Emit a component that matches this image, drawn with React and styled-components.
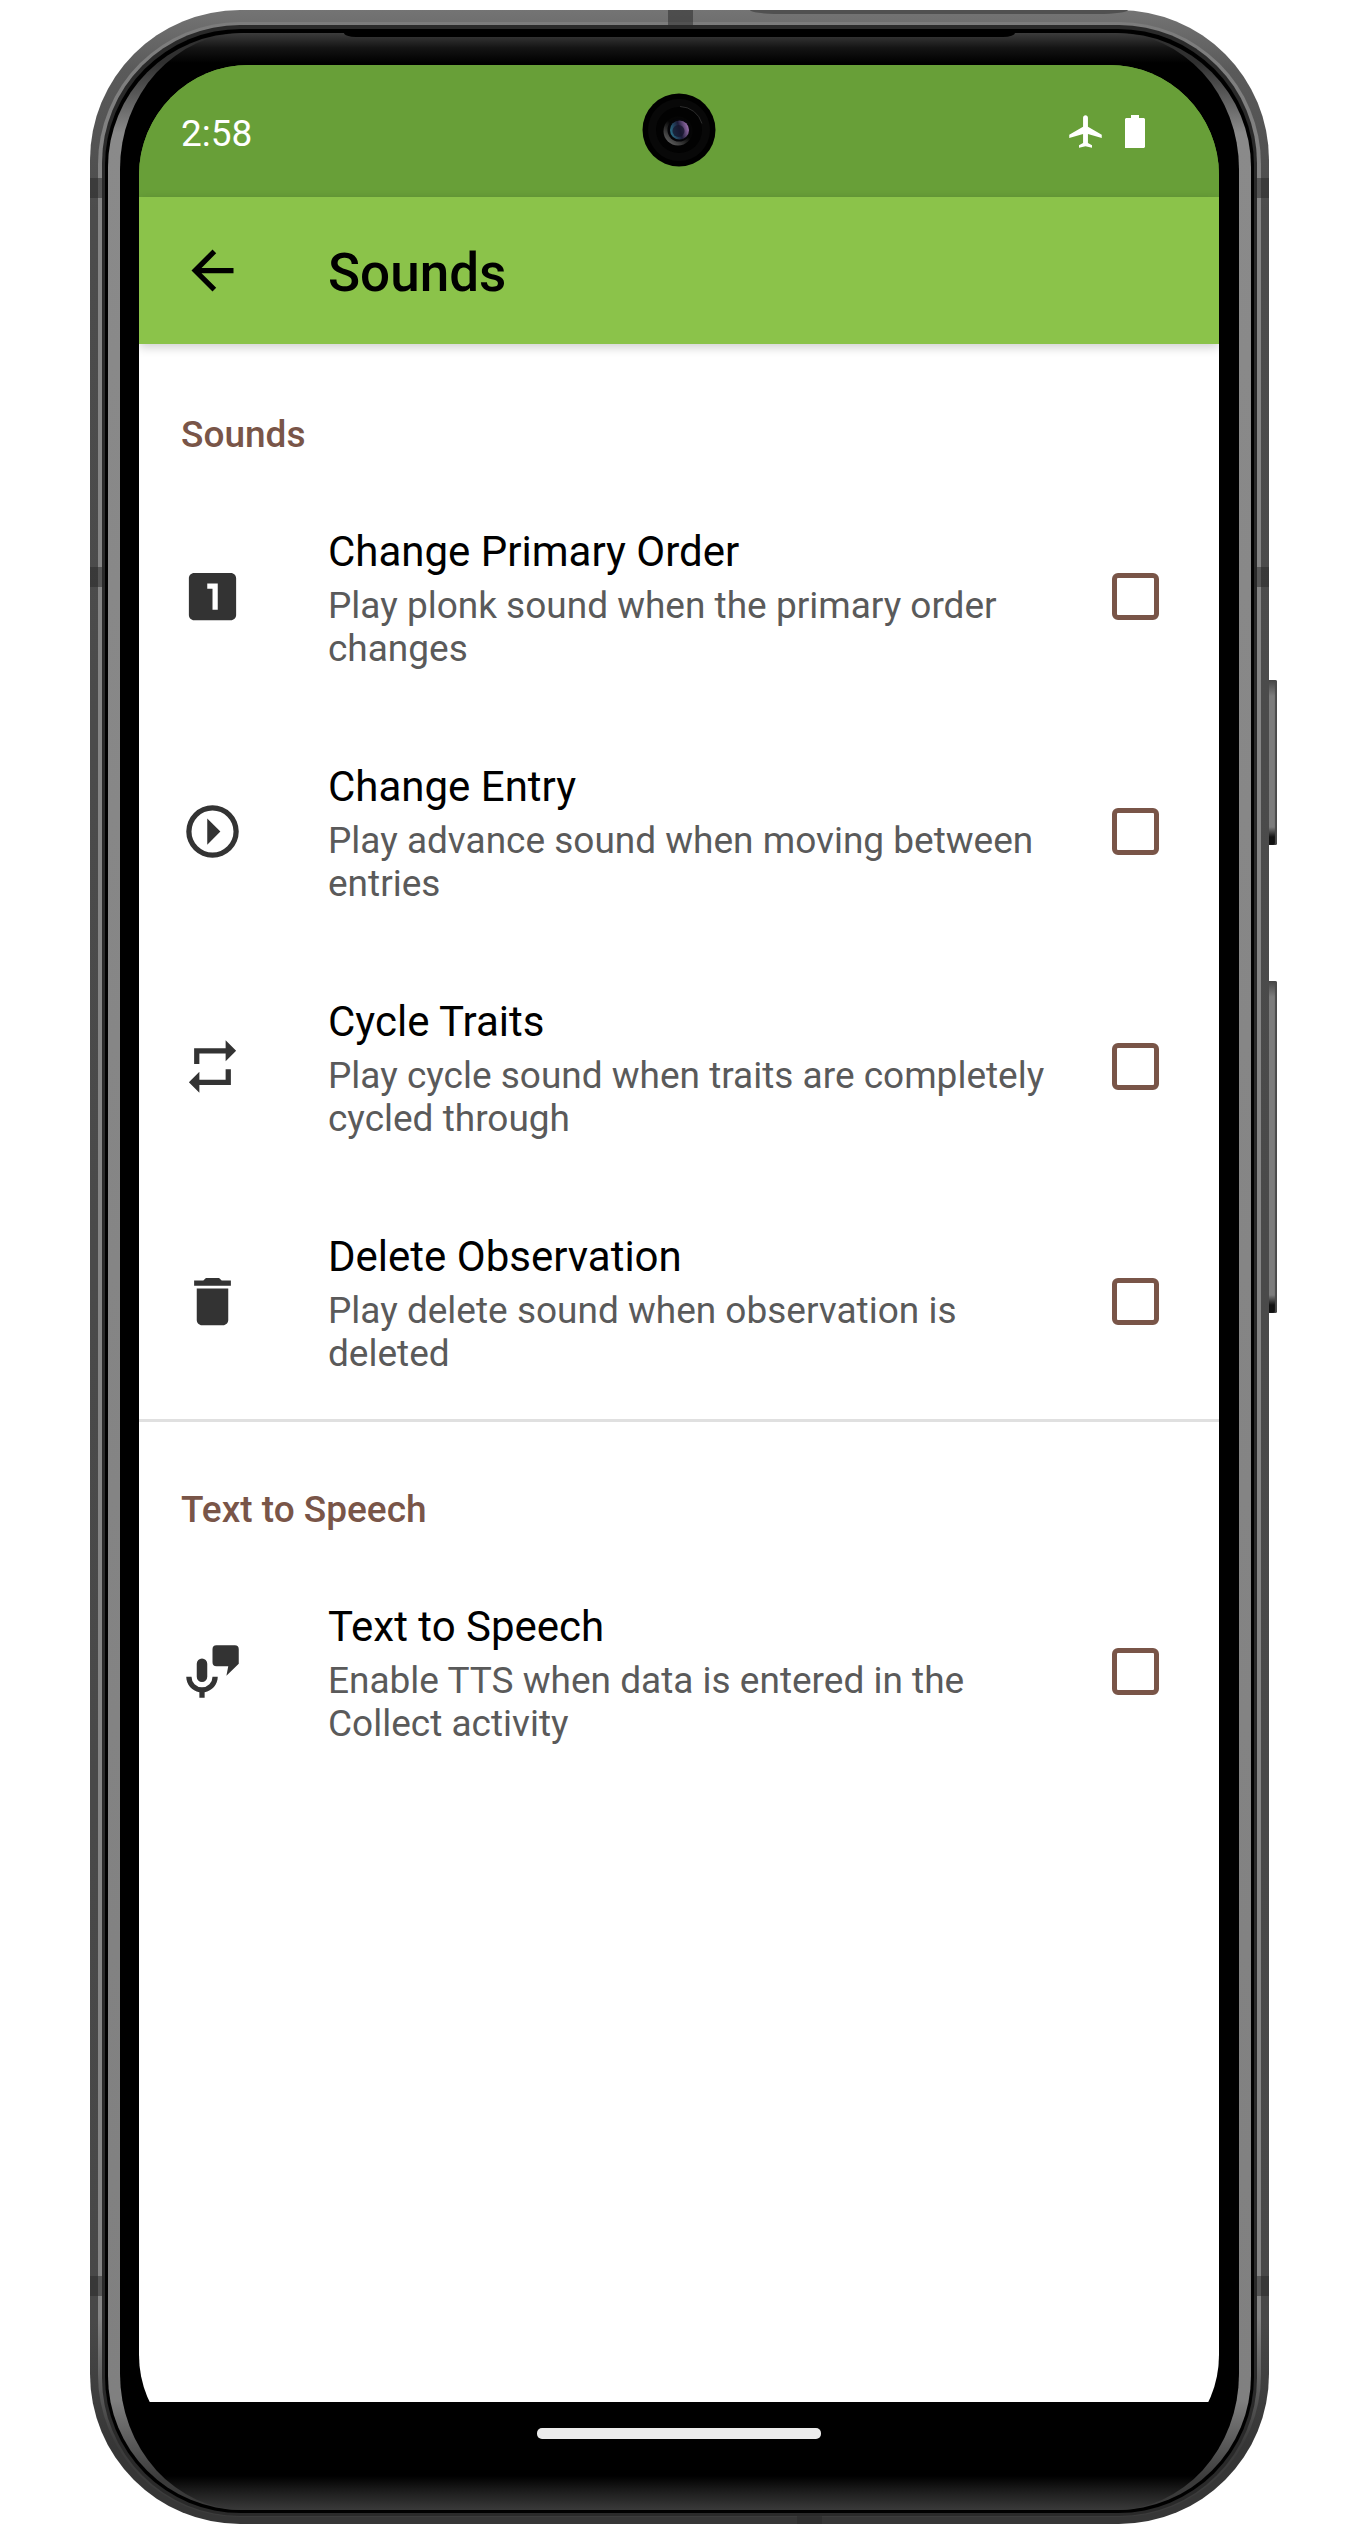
import React from "react";
import styled, { createGlobalStyle } from "styled-components";

const GlobalStyle = createGlobalStyle`
  *, *::before, *::after { box-sizing: border-box; }
  body {
    margin: 0;
    background: #fff;
    font-family: Roboto, "Noto Sans", sans-serif;
    color: #000;
  }
`;

const Page = styled.div`
  display: flex;
  justify-content: center;
  padding: 10px 98px 10px 90px;
`;

/* ---- device body, from the outside in ---- */

const Shell = styled.div`
  position: relative;
  flex: 1;
  max-width: 1179px;
  padding: 12px 8px 7px;
  border-radius: 150px;
  background: linear-gradient(#747474, #5a5a5a 60px, #4c4c4c 200px, #484848 92%, #363636 97%);
`;

const Rim = styled.div`
  padding: 3px 4px 1px;
  border-radius: 142px;
  background: linear-gradient(#7c7c7c, #858585 200px, #858585 92%, #3c3c3c 97%);
`;

const Groove = styled.div`
  padding: 4px 3px 3px;
  border-radius: 138px;
  background: #2a2a2a;
`;

const Gasket = styled.div`
  padding: 4px 3px 3px;
  border-radius: 136px;
  background: #000;
`;

const Glass = styled.div`
  padding: 0 12px;
  border-radius: 134px;
  background: linear-gradient(#303030 30px, #8a8a8a 100px, #808080 calc(100% - 110px), #3a3a3a calc(100% - 30px));
`;

const Bezel = styled.div`
  position: relative;
  padding: 32px 20px 45px 19px;
  border-radius: 124px / 136px;
  background: linear-gradient(#3c3c3c, #141414 15px, #000 30px, #000 calc(100% - 34px), #1a1a1a calc(100% - 20px), #3a3a3a 100%);
`;

const Earpiece = styled.span`
  position: absolute;
  top: 0;
  left: 20%;
  right: 20%;
  height: 4px;
  border-radius: 0 0 12px 12px / 0 0 4px 4px;
  background: #000;
`;

const isSide = (edge) => edge === "left" || edge === "right";

const Band = styled.span`
  position: absolute;
  background: rgba(40, 40, 40, 0.5);
  width: ${(p) => (isSide(p.$edge) ? 15 : 25)}px;
  height: ${(p) => (isSide(p.$edge) ? 20 : p.$edge === "top" ? 19 : 8)}px;
  ${(p) => p.$edge}: 0;
  ${(p) => (isSide(p.$edge) ? "top" : "left")}: ${(p) => p.$at};
`;

const TopPlate = styled.span`
  position: absolute;
  top: 0;
  left: 56%;
  right: 12%;
  height: 4px;
  border-radius: 0 0 30px 30px / 0 0 4px 4px;
  background: #505050;
`;

const SideKey = styled.span`
  position: absolute;
  left: 100%;
  top: ${(p) => p.$top}px;
  width: 8px;
  height: ${(p) => p.$length}px;
  border-radius: 0 2px 2px 0;
  background: linear-gradient(#444, #7c7c7c 16px, #7c7c7c calc(100% - 18px), #111 calc(100% - 8px));
  box-shadow: inset -2px 0 1px #4a4a4a;
`;

/* ---- screen ---- */

const Screen = styled.div`
  display: flex;
  flex-direction: column;
  min-height: 2400px;
  overflow: hidden;
  border-radius: 110px;
  background: linear-gradient(#689f38 132px, #fff 132px, #fff calc(100% - 63px), #000 calc(100% - 63px));
`;

const StatusBar = styled.div`
  position: relative;
  display: flex;
  align-items: center;
  justify-content: space-between;
  height: 132px;
  padding: 4px 74px 0 42px;
  background: #689f38;
  color: #fff;
  font-size: 37px;
  line-height: 43px;
`;

const StatusIcons = styled.div`
  display: flex;
  align-items: center;
  gap: 20px;
  padding-bottom: 4px;
`;

const Camera = styled.svg`
  position: absolute;
  top: 28px;
  left: calc(50% - 37px);
`;

const AppBar = styled.header`
  position: relative;
  display: flex;
  align-items: center;
  gap: 84px;
  height: 147px;
  padding: 0 42px;
  background: #8bc34a;
  box-shadow: 0 3px 10px rgba(0, 0, 0, 0.2);
`;

const BackButton = styled.button`
  display: flex;
  padding: 0;
  border: 0;
  background: none;
  color: #000;
`;

const AppTitle = styled.h1`
  margin: 0;
  padding-top: 4px;
  font-size: 53px;
  line-height: 62px;
  font-weight: 500;
`;

const Settings = styled.main`
  flex: 1;
`;

const SectionTitle = styled.h2`
  display: flex;
  align-items: flex-end;
  height: 135px;
  margin: 0;
  padding: 0 42px 23px;
  color: #795548;
  font-size: 37px;
  line-height: 43px;
  font-weight: 500;
`;

const Section = styled.section`
  & + & > ${SectionTitle} { border-top: 3px solid #e0e0e0; }
`;

const Row = styled.label`
  display: flex;
  align-items: center;
  min-height: 235px;
  padding: 0 60px 0 42px;
`;

const IconSlot = styled.span`
  display: flex;
  margin-right: 84px;
  color: #333;
`;

const RowText = styled.span`
  flex: 1;
  display: flex;
  flex-direction: column;
  gap: 8px;
  padding: 4px 40px 0 0;
`;

const RowTitle = styled.span`
  font-size: 42px;
  line-height: 49px;
`;

const RowSummary = styled.span`
  color: #5a5a5a;
  font-size: 37px;
  line-height: 43px;
`;

const Checkbox = styled.input`
  appearance: none;
  width: 47px;
  height: 47px;
  margin: 0;
  border: 5px solid #795548;
  border-radius: 6px;
  background: #fff;
  &:checked { background: #795548; }
`;

const NavBar = styled.div`
  display: flex;
  justify-content: center;
  align-items: center;
  height: 63px;
  background: #000;
`;

const HomePill = styled.span`
  width: 284px;
  height: 11px;
  border-radius: 5px;
  background: #ebebeb;
`;

function Icon({ size = 63, children }) {
  return (
    <svg width={size} height={size} viewBox="0 0 24 24" fill="currentColor" aria-hidden="true">
      {children}
    </svg>
  );
}

const icons = {
  order: (
    <path d="M19 3H5c-1.100 0-2 .9-2 2v14c0 1.100.9 2 2 2h14c1.100 0 2-.9 2-2V5c0-1.100-.9-2-2-2zm-5 14h-2V9h-2V7h4v10z" />
  ),
  entry: (
    <path d="M12 2a10 10 0 1 0 0 20 10 10 0 0 0 0-20zm0 18a8 8 0 1 1 0-16 8 8 0 0 1 0 16zM10 17l5-5-5-5v10z" />
  ),
  cycle: <path d="M5 5h12V2l4 4-4 4V7H7v4H5V5zm14 14H7v3l-4-4 4-4v3h10v-4h2v6z" />,
  remove: <path d="M6 19c0 1.100.9 2 2 2h8c1.100 0 2-.9 2-2V7H6v12zM19 4h-3.500l-1-1h-5l-1 1H5v2h14V4z" />,
  speech: (
    <>
      <path d="M8 7a2 2 0 0 1 2 2v5a2 2 0 0 1-4 0V9a2 2 0 0 1 2-2zM14 14c0 3-2.200 5.400-5 5.900V22H7v-2.100C4.200 19.400 2 17 2 14h2a4 4 0 0 0 8 0h2z" />
      <path d="M13.500 2h7A1.500 1.500 0 0 1 22 3.500V9l-4.700 4.600.7-3.600h-4.500A1.500 1.500 0 0 1 12 8.500v-5A1.500 1.500 0 0 1 13.500 2z" />
    </>
  ),
};

const sections = [
  {
    title: "Sounds",
    rows: [
      { icon: "order", title: "Change Primary Order", summary: "Play plonk sound when the primary order changes" },
      { icon: "entry", title: "Change Entry", summary: "Play advance sound when moving between entries" },
      { icon: "cycle", title: "Cycle Traits", summary: "Play cycle sound when traits are completely cycled through" },
      { icon: "remove", title: "Delete Observation", summary: "Play delete sound when observation is deleted" },
    ],
  },
  {
    title: "Text to Speech",
    rows: [
      { icon: "speech", title: "Text to Speech", summary: "Enable TTS when data is entered in the Collect activity" },
    ],
  },
];

function CameraLens() {
  return (
    <Camera width="74" height="74" viewBox="0 0 74 74" aria-hidden="true">
      <defs>
        <linearGradient id="lens" x1="0" y1="0.600" x2="1" y2="0.300">
          <stop offset="0" stopColor="#2a6f88" />
          <stop offset="0.500" stopColor="#1c1c38" />
          <stop offset="1" stopColor="#a878b8" />
        </linearGradient>
        <linearGradient id="lensRing" x1="0" y1="1" x2="0.800" y2="0">
          <stop offset="0" stopColor="#777" />
          <stop offset="0.600" stopColor="#050505" />
        </linearGradient>
      </defs>
      <circle cx="37" cy="37" r="36.500" fill="#000" />
      <circle cx="37" cy="37" r="31" fill="#080808" />
      <circle cx="37" cy="37" r="23" fill="#020202" />
      <path d="M38 13.500a23.500 23.500 0 0 1 22 17" fill="none" stroke="#2c2c2c" strokeWidth="1" />
      <circle cx="36" cy="38" r="14.500" fill="url(#lensRing)" />
      <circle cx="37" cy="37" r="11.500" fill="#050508" />
      <circle cx="37.500" cy="37" r="9.500" fill="url(#lens)" />
      <circle cx="36.500" cy="38" r="6" fill="#16162c" opacity="0.750" />
    </Camera>
  );
}

export default function App() {
  return (
    <>
      <GlobalStyle />
      <Page>
        <Shell>
          <Rim>
            <Groove>
              <Gasket>
                <Glass>
                  <Bezel>
                    <Earpiece />
                    <Screen>
                      <StatusBar>
                        <span>2:58</span>
                        <CameraLens />
                        <StatusIcons>
                          <Icon size={39}>
                            <path d="M22 16v-2l-8.500-5V3.500C13.500 2.670 12.830 2 12 2s-1.500.67-1.500 1.500V9L2 14v2l8.500-2.500V19L8 20.500V22l4-1 4 1v-1.500L13.500 19v-5.500L22 16z" />
                          </Icon>
                          <svg width="20" height="33" viewBox="0 0 20 33" fill="currentColor" aria-hidden="true">
                            <path d="M6 0h8v3h5l1 1v28l-1 1H0V4l1-1h5z" />
                          </svg>
                        </StatusIcons>
                      </StatusBar>
                      <AppBar>
                        <BackButton type="button" aria-label="Back">
                          <Icon>
                            <path d="M20 11H7.830l5.590-5.590L12 4l-8 8 8 8 1.410-1.410L7.830 13H20v-2z" />
                          </Icon>
                        </BackButton>
                        <AppTitle>Sounds</AppTitle>
                      </AppBar>
                      <Settings>
                        {sections.map((section) => (
                          <Section key={section.title}>
                            <SectionTitle>{section.title}</SectionTitle>
                            {section.rows.map((row) => (
                              <Row key={row.title}>
                                <IconSlot>
                                  <Icon>{icons[row.icon]}</Icon>
                                </IconSlot>
                                <RowText>
                                  <RowTitle>{row.title}</RowTitle>
                                  <RowSummary>{row.summary}</RowSummary>
                                </RowText>
                                <Checkbox type="checkbox" />
                              </Row>
                            ))}
                          </Section>
                        ))}
                      </Settings>
                      <NavBar>
                        <HomePill />
                      </NavBar>
                    </Screen>
                  </Bezel>
                </Glass>
              </Gasket>
            </Groove>
          </Rim>
          <TopPlate />
          <Band $edge="left" $at="168px" />
          <Band $edge="right" $at="168px" />
          <Band $edge="left" $at="557px" />
          <Band $edge="right" $at="557px" />
          <Band $edge="left" $at="2266px" />
          <Band $edge="right" $at="2266px" />
          <Band $edge="top" $at="49%" />
          <Band $edge="bottom" $at="60%" />
          <SideKey $top={670} $length={165} />
          <SideKey $top={971} $length={332} />
        </Shell>
      </Page>
    </>
  );
}
